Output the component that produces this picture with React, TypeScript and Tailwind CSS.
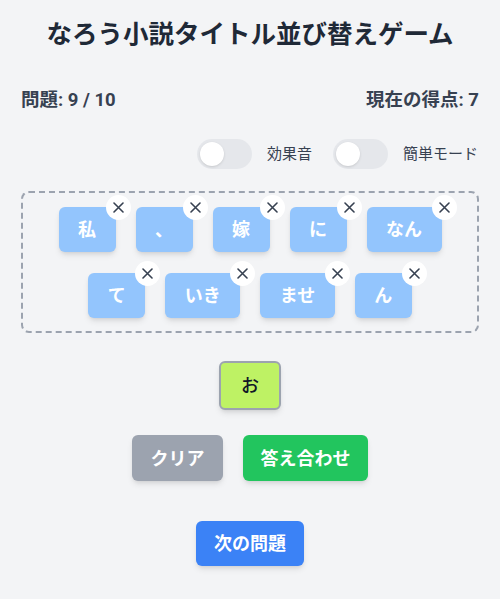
import React from 'react';

const row1 = ['私', '、', '嫁', 'に', 'なん'];
const row2 = ['て', 'いき', 'ませ', 'ん'];

const Toggle: React.FC<{ label: string }> = ({ label }) => (
  <div className="flex items-center gap-[15px]">
    <div className="w-[55px] h-[30px] rounded-full bg-[#e5e7eb] p-[3px] flex items-center">
      <div className="w-6 h-6 rounded-full bg-white shadow" />
    </div>
    <span className="text-[15px] text-[#374151]">{label}</span>
  </div>
);

const Tile: React.FC<{ text: string }> = ({ text }) => (
  <div className="relative">
    <div className="h-[45px] px-[19.5px] flex items-center justify-center rounded-md bg-[#93c5fd] text-white text-[18px] font-bold shadow-md">
      {text}
    </div>
    {/* remove button */}
    <div className="absolute -top-[12px] -right-[15px] w-[25px] h-[25px] rounded-full bg-white flex items-center justify-center">
      <svg width="11" height="11" viewBox="0 0 11 11">
        <path d="M1 1L10 10M10 1L1 10" stroke="#374151" strokeWidth="1.6" strokeLinecap="round" />
      </svg>
    </div>
  </div>
);

export default function App() {
  return (
    <div
      className="min-h-[599px] w-full bg-[#f3f4f6] px-[21px] pt-[18px] flex flex-col items-center"
      style={{ fontFamily: 'Roboto, "Noto Sans CJK JP", sans-serif' }}
    >
      <h1 className="text-[25.5px] leading-8 font-bold text-[#1f2937]">なろう小説タイトル並び替えゲーム</h1>

      {/* Score row */}
      <div className="w-full mt-[36px] flex justify-between text-[18.5px] leading-7 font-bold text-[#374151]">
        <span>問題: 9 / 10</span>
        <span>現在の得点: 7</span>
      </div>

      {/* Toggles */}
      <div className="w-full mt-[25px] flex justify-end gap-[21px] pr-[1px]">
        <Toggle label="効果音" />
        <Toggle label="簡単モード" />
      </div>

      {/* Answer area */}
      <div className="w-full mt-[22px] border-2 border-dashed border-[#9ca3af] rounded-lg px-[14px] pt-[14px] pb-[13px] flex flex-col items-center gap-[21px]">
        <div className="flex gap-5">
          {row1.map((t, i) => (
            <Tile key={i} text={t} />
          ))}
        </div>
        <div className="flex gap-5">
          {row2.map((t, i) => (
            <Tile key={i} text={t} />
          ))}
        </div>
      </div>

      {/* Remaining pieces */}
      <div className="mt-[28px] w-[62px] h-[49px] flex items-center justify-center rounded-md border-2 border-[#9ca3af] bg-[#bef264] text-[18px] font-medium text-[#111827] shadow-md">
        お
      </div>

      {/* Actions */}
      <div className="mt-[25px] flex gap-5">
        <button className="h-[46px] px-[18.5px] rounded-md bg-[#9ca3af] text-white text-[18px] font-bold shadow-md">
          クリア
        </button>
        <button className="h-[46px] px-[17.5px] rounded-md bg-[#22c55e] text-white text-[18px] font-bold shadow-md">
          答え合わせ
        </button>
      </div>

      <button className="mt-[40px] h-[45px] px-[18px] rounded-md bg-[#3b82f6] text-white text-[18px] font-bold shadow-md">
        次の問題
      </button>
    </div>
  );
}
